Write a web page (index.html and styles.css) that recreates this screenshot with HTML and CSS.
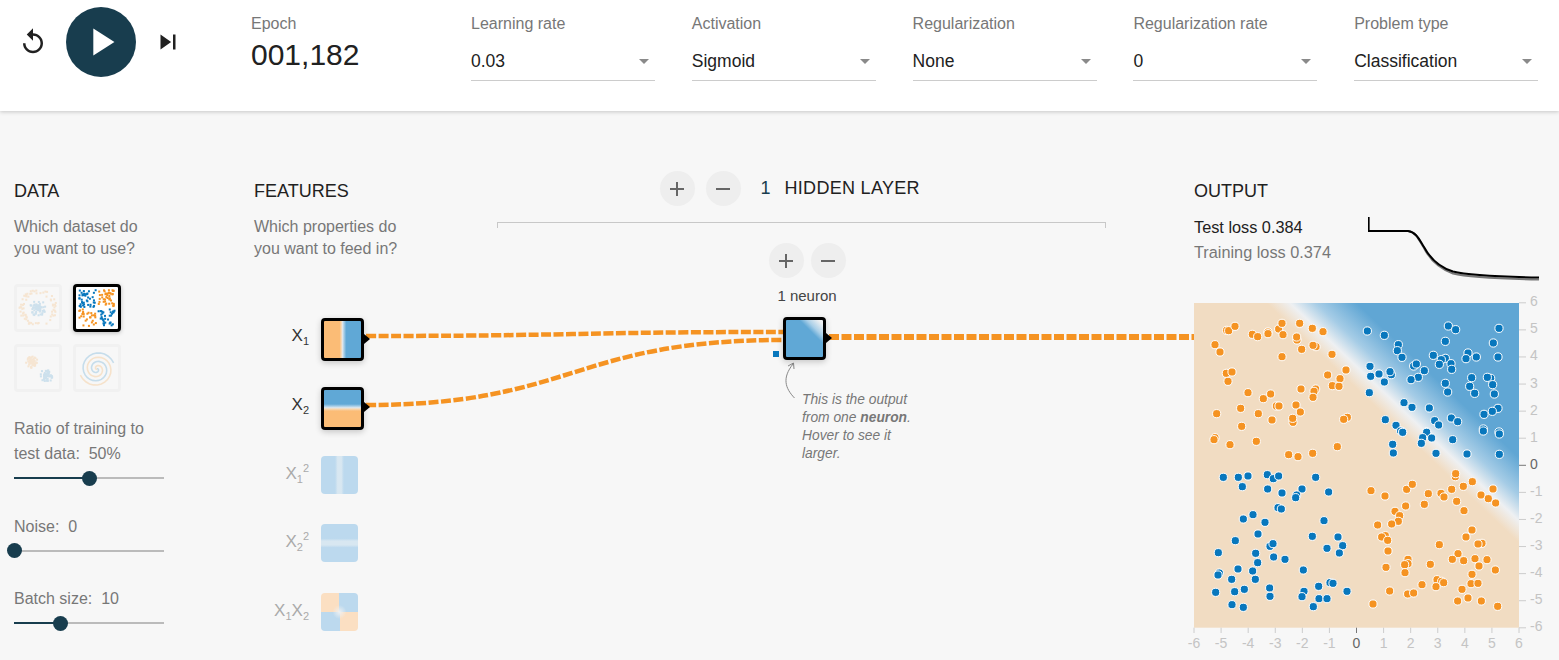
FILE: index.html
```html
<!DOCTYPE html>
<html lang="en">
<head>
  <meta charset="UTF-8">
  <title>Neural network playground</title>
  <link rel="stylesheet" href="styles.css">
</head>
<body>
  <header class="top-bar">
    <div class="player">
      <svg class="icon-btn" viewBox="0 0 24 24"><path d="M12 5V1L7 6l5 5V7c3.31 0 6 2.69 6 6s-2.69 6-6 6-6-2.69-6-6H4c0 4.42 3.58 8 8 8s8-3.58 8-8-3.58-8-8-8z"/></svg>
      <div class="play-btn">
        <svg viewBox="0 0 24 24"><path d="M8 5v14l11-7z"/></svg>
      </div>
      <svg class="icon-btn" viewBox="0 0 24 24"><path d="M6 18l8.5-6L6 6v12zM16 6v12h2V6h-2z"/></svg>
    </div>
    <div class="epoch">
      <div class="control-label">Epoch</div>
      <div class="epoch-value">001,182</div>
    </div>
    <div class="dropdowns">
      <div class="dropdown">
        <div class="control-label">Learning rate</div>
        <div class="dropdown-value">0.03</div>
      </div>
      <div class="dropdown">
        <div class="control-label">Activation</div>
        <div class="dropdown-value">Sigmoid</div>
      </div>
      <div class="dropdown">
        <div class="control-label">Regularization</div>
        <div class="dropdown-value">None</div>
      </div>
      <div class="dropdown">
        <div class="control-label">Regularization rate</div>
        <div class="dropdown-value">0</div>
      </div>
      <div class="dropdown">
        <div class="control-label">Problem type</div>
        <div class="dropdown-value">Classification</div>
      </div>
    </div>
  </header>

  <main class="main">
    <svg class="wires" viewBox="0 111 1559 549">
      <path class="wire" d="M366 336 C573 336 573 332 783 332"/>
      <path class="wire" d="M366 405 C573 405 573 340 783 340"/>
      <path class="wire wire-thick" d="M829 337 H1194"/>
      <path class="note-arrow" d="M794.5 398 C785 388 782 378 793 364"/>
      <path class="note-arrow" d="M788 366 L793.5 363 L794 369"/>
    </svg>

    <section class="col-data">
      <h4>DATA</h4>
      <p class="hint">Which dataset do<br>you want to use?</p>
      <div class="datasets">
        <svg class="dataset" id="ds-circle" viewBox="0 0 42 42"></svg>
        <svg class="dataset selected" id="ds-xor" viewBox="0 0 42 42"></svg>
        <svg class="dataset" id="ds-gauss" viewBox="0 0 42 42"></svg>
        <svg class="dataset" id="ds-spiral" viewBox="0 0 42 42"></svg>
      </div>
      <div class="slider-block">
        <div class="slider-label">Ratio of training to<br>test data:&nbsp; 50%</div>
        <div class="slider"><div class="slider-fill" style="width: 50%"></div><div class="slider-thumb" style="left: 50%"></div></div>
      </div>
      <div class="slider-block">
        <div class="slider-label">Noise:&nbsp; 0</div>
        <div class="slider"><div class="slider-fill" style="width: 0%"></div><div class="slider-thumb" style="left: 0%"></div></div>
      </div>
      <div class="slider-block">
        <div class="slider-label">Batch size:&nbsp; 10</div>
        <div class="slider"><div class="slider-fill" style="width: 30.7%"></div><div class="slider-thumb" style="left: 30.7%"></div></div>
      </div>
    </section>

    <section class="col-features">
      <h4>FEATURES</h4>
      <p class="hint">Which properties do<br>you want to feed in?</p>
      <div class="feature-list">
        <div class="feature">
          <div class="feature-name active">X<sub>1</sub></div>
          <div class="node heat-x1"></div>
        </div>
        <div class="feature">
          <div class="feature-name active">X<sub>2</sub></div>
          <div class="node heat-x2"></div>
        </div>
        <div class="feature">
          <div class="feature-name">X<sub>1</sub><sup>2</sup></div>
          <div class="node-off heat-x1sq"></div>
        </div>
        <div class="feature">
          <div class="feature-name">X<sub>2</sub><sup>2</sup></div>
          <div class="node-off heat-x2sq"></div>
        </div>
        <div class="feature">
          <div class="feature-name">X<sub>1</sub>X<sub>2</sub></div>
          <div class="node-off heat-x1x2"></div>
        </div>
      </div>
    </section>

    <section class="col-network">
      <div class="layers-head">
        <div class="round-btn">
          <svg viewBox="0 0 24 24"><path d="M19 13h-6v6h-2v-6H5v-2h6V5h2v6h6v2z"/></svg>
        </div>
        <div class="round-btn">
          <svg viewBox="0 0 24 24"><path d="M19 13H5v-2h14v2z"/></svg>
        </div>
        <span class="layers-count">1</span>
        <span class="layers-title">HIDDEN LAYER</span>
      </div>
      <div class="bracket"></div>
      <div class="layer">
        <div class="layer-btns">
          <div class="round-btn">
            <svg viewBox="0 0 24 24"><path d="M19 13h-6v6h-2v-6H5v-2h6V5h2v6h6v2z"/></svg>
          </div>
          <div class="round-btn">
            <svg viewBox="0 0 24 24"><path d="M19 13H5v-2h14v2z"/></svg>
          </div>
        </div>
        <div class="neuron-count">1 neuron</div>
        <div class="node neuron heat-neuron"><span class="bias"></span></div>
        <p class="note">This is the output<br>from one <b>neuron</b>.<br>Hover to see it<br>larger.</p>
      </div>
    </section>

    <section class="col-output">
      <h4>OUTPUT</h4>
      <div class="loss-row">
        <div class="losses">
          <div class="loss-test">Test loss 0.384</div>
          <div class="loss-train">Training loss 0.374</div>
        </div>
        <svg class="loss-chart" viewBox="1368 216 171 70">
          <path class="line-train" d="M1368.5 217 V231 H1408 C1416 232 1419 240 1424 248 C1430 260 1438 268 1453 273.5 C1465 276.5 1490 278.5 1539 279.5"/>
          <path class="line-test" d="M1368.5 217 V231 H1408 C1416 232 1419 239 1424 247 C1430 258 1438 267 1453 271.5 C1465 274.5 1490 276.5 1539 277.5"/>
        </svg>
      </div>
      <svg class="plot" id="plot" viewBox="1184 290 375 366">
        <defs>
          <linearGradient id="heat" gradientUnits="userSpaceOnUse" x1="1393.5" y1="422.6" x2="1436.2" y2="377.7">
            <stop offset="0" stop-color="#f1dcc2"/>
            <stop offset="0.26" stop-color="#eef0f2"/>
            <stop offset="0.55" stop-color="#a5cce6"/>
            <stop offset="1" stop-color="#60a6d4"/>
          </linearGradient>
        </defs>
        <rect x="1194" y="302" width="325" height="324.7" fill="url(#heat)"/>
      </svg>
    </section>
  </main>

  <script src="app.js"></script>
</body>
</html>
```

FILE: styles.css
```css
* {
  box-sizing: border-box;
}

body {
  margin: 0;
  height: 660px;
  overflow: hidden;
  background: #f7f7f7;
  font-family: "Liberation Sans", Arial, sans-serif;
  color: #777;
}

/* top bar */
.top-bar {
  display: flex;
  height: 111px;
  background: #fff;
  box-shadow: 0 1px 4px rgba(0, 0, 0, 0.2);
  position: relative;
  z-index: 2;
}

.player {
  display: flex;
  align-items: center;
  gap: 18px;
  height: 70px;
  margin: 7px 0 0 18px;
}

.icon-btn {
  width: 30px;
  height: 30px;
  fill: #212121;
}

.play-btn {
  width: 70px;
  height: 70px;
  margin-right: -1px;
  border-radius: 50%;
  background: #183d4e;
  display: flex;
  align-items: center;
  justify-content: center;
}

.play-btn svg {
  width: 46px;
  height: 46px;
  fill: #fff;
}

.control-label {
  font-size: 16px;
  line-height: 20px;
  color: #777;
}

.epoch {
  width: 220px;
  margin-left: 68px;
  padding-top: 14px;
}

.epoch-value {
  font-size: 30px;
  line-height: 36px;
  margin-top: 3px;
  color: #212121;
}

.dropdowns {
  display: flex;
  gap: 36.8px;
  padding-top: 14px;
}

.dropdown {
  width: 184px;
}

.dropdown-value {
  position: relative;
  font-size: 17.5px;
  line-height: 20px;
  height: 38px;
  margin-top: 9px;
  padding-top: 8px;
  color: #212121;
  border-bottom: 1px solid #ccc;
}

.dropdown-value::after {
  content: "";
  position: absolute;
  right: 6px;
  top: 16px;
  border-left: 5px solid transparent;
  border-right: 5px solid transparent;
  border-top: 5px solid #8a8a8a;
}

/* page columns */
.main {
  position: relative;
  display: flex;
  height: 549px;
}

.wires {
  position: absolute;
  left: 0;
  top: 0;
  width: 1559px;
  height: 549px;
  pointer-events: none;
}

.wire {
  fill: none;
  stroke: #f59322;
  stroke-width: 4.5;
  stroke-dasharray: 10 2.5;
}

.wire-thick {
  stroke-width: 6;
}

.note-arrow {
  fill: none;
  stroke: #888;
  stroke-width: 1;
}

section {
  padding-top: 68px;
}

h4 {
  margin: 0 0 13px;
  font-size: 18px;
  line-height: 24px;
  font-weight: normal;
  color: #212121;
}

.hint {
  margin: 0;
  font-size: 16px;
  line-height: 22px;
  color: #777;
}

.col-data {
  width: 254px;
  padding-left: 14px;
}

.datasets {
  display: grid;
  grid-template-columns: 48px 48px;
  gap: 12px 11px;
  margin-top: 24px;
}

.dataset {
  width: 48px;
  height: 48px;
  border: 3px solid #f1f1f1;
  border-radius: 4px;
  display: block;
}

.dataset.selected {
  border-color: #000;
  background: #fff;
  box-shadow: 0 1px 4px rgba(0, 0, 0, 0.25);
}

.slider-block {
  width: 150px;
  margin-top: 24px;
}

.slider-block + .slider-block {
  margin-top: 34.5px;
}

.slider-label {
  font-size: 16px;
  line-height: 25px;
  color: #777;
}

.slider {
  position: relative;
  height: 2px;
  margin-top: 11px;
  margin-bottom: 7px;
  background: #bbb;
}

.slider-fill {
  height: 2px;
  background: #183d4e;
}

.slider-thumb {
  position: absolute;
  top: -6.5px;
  width: 15px;
  height: 15px;
  margin-left: -7.5px;
  border-radius: 50%;
  background: #183d4e;
}

.col-features {
  width: 242px;
}

.feature-list {
  margin-top: 58px;
}

.feature {
  display: flex;
  align-items: flex-start;
  gap: 12px;
  height: 68.75px;
}

.feature-name {
  width: 55px;
  text-align: right;
  font-size: 17px;
  line-height: 35px;
  color: #aaa;
  white-space: nowrap;
}

.feature-name.active {
  color: #333;
}

.feature-name sub,
.feature-name sup {
  font-size: 11px;
  line-height: 0;
}

.node {
  position: relative;
  width: 43px;
  height: 43px;
  border: 3px solid #000;
  border-radius: 4px;
  box-shadow: 0 2px 6px rgba(0, 0, 0, 0.2);
}

.node::after {
  content: "";
  position: absolute;
  right: -9px;
  top: 12.5px;
  border-top: 5px solid transparent;
  border-bottom: 5px solid transparent;
  border-left: 6px solid #000;
}

.node-off {
  width: 37px;
  height: 38px;
  border-radius: 4px;
}

.heat-x1 {
  background: linear-gradient(90deg, #fbbc76 0 42%, #f5d9b8 47%, #dfe6ec 50%, #a9cfe8 54%, #60a8d6 60%);
}

.heat-x2 {
  background: linear-gradient(180deg, #60a8d6 0 38%, #a9cfe8 44%, #dfe6ec 48%, #f5d9b8 51%, #fbbc76 57%);
}

.heat-neuron {
  background: linear-gradient(45deg, #60a8d6 0 68%, #a9cfe8 78%, #eef0f2 94%);
}

.heat-x1sq {
  background: linear-gradient(90deg, #bcd9ee 0 38%, #d8e7f1 45% 55%, #bcd9ee 62%);
}

.heat-x2sq {
  background: linear-gradient(180deg, #bcd9ee 0 38%, #d8e7f1 45% 55%, #bcd9ee 62%);
}

.heat-x1x2 {
  background:
    radial-gradient(circle, #eef0f1 0, rgba(238, 240, 241, 0) 7px),
    conic-gradient(#bcd9ee 0 90deg, #fbdfc2 90deg 180deg, #bcd9ee 180deg 270deg, #fbdfc2 270deg);
}

/* network column */
.col-network {
  width: 698px;
  padding-top: 60px;
}

.layers-head {
  display: flex;
  align-items: center;
  height: 35px;
  padding-left: 163.5px;
  gap: 11px;
}

.round-btn {
  width: 35px;
  height: 35px;
  border-radius: 50%;
  background: #eee;
  display: flex;
  align-items: center;
  justify-content: center;
}

.round-btn svg {
  width: 24px;
  height: 24px;
  fill: #666;
}

.layers-count {
  margin-left: 9px;
  font-size: 18px;
  color: #183d4e;
}

.layers-title {
  margin-left: 3px;
  font-size: 18px;
  letter-spacing: 0.3px;
  color: #212121;
}

.bracket {
  width: 609px;
  height: 6px;
  margin: 16px 0 0 1px;
  border: 1px solid #c8c8c8;
  border-bottom: none;
}

.layer {
  width: 90px;
  margin: 15px 0 0 266px;
}

.layer-btns {
  display: flex;
  justify-content: center;
  gap: 7px;
}

.neuron-count {
  margin-top: 9px;
  font-size: 15px;
  line-height: 18px;
  text-align: center;
  color: #444;
}

.neuron {
  margin: 12px 0 0 21px;
}

.bias {
  position: absolute;
  left: -13px;
  top: 31px;
  width: 6px;
  height: 6px;
  background: #0877bd;
}

.note {
  width: 130px;
  margin: 31px 0 0 40px;
  font-size: 13.8px;
  line-height: 18px;
  font-style: italic;
  color: #777;
}

/* output column */
.col-output {
  width: 365px;
}

.loss-row {
  display: flex;
  justify-content: space-between;
  height: 75px;
  padding-right: 20px;
}

.losses {
  margin-top: -1px;
  font-size: 16.3px;
  line-height: 24.5px;
}

.loss-test {
  color: #212121;
}

.loss-train {
  color: #777;
}

.loss-chart {
  width: 171px;
  height: 70px;
  flex: none;
}

.line-test,
.line-train {
  fill: none;
  stroke-width: 2;
}

.line-test {
  stroke: #000;
}

.line-train {
  stroke: #777;
}

.plot {
  display: block;
  width: 375px;
  height: 366px;
  margin-left: -10px;
}

.dot {
  stroke: #fff;
  stroke-width: 1;
}

.dot-orange {
  fill: #f59322;
}

.dot-blue {
  fill: #0877bd;
}

.tick {
  stroke: #ccc;
}

.tick-zero {
  stroke: #777;
}

.tick-text {
  font-size: 14px;
  fill: #c4c4c4;
}

.tick-text-zero {
  fill: #666;
}

.spiral {
  fill: none;
  stroke-width: 1.6;
}
```

FILE: app.js
```js
const SVG_NS = 'http://www.w3.org/2000/svg';
const ORANGE = '#f59322';
const BLUE = '#0877bd';

function el(parent, name, attrs, text) {
  const node = document.createElementNS(SVG_NS, name);
  for (const key in attrs) node.setAttribute(key, attrs[key]);
  if (text !== undefined) node.textContent = text;
  parent.appendChild(node);
  return node;
}

// seeded generator, the thumbnails should look the same every load
let seed = 1234;
function rnd() {
  seed = (seed + 0x6D2B79F5) | 0;
  let t = Math.imul(seed ^ (seed >>> 15), 1 | seed);
  t = (t + Math.imul(t ^ (t >>> 7), 61 | t)) ^ t;
  return ((t ^ (t >>> 14)) >>> 0) / 4294967296;
}

// ---- dataset thumbnails ----
function square(svg, x, y, color, group) {
  el(group || svg, 'rect', { x: x - 1, y: y - 1, width: 2, height: 2, fill: color });
}

function drawCircle() {
  const svg = document.getElementById('ds-circle');
  const g = el(svg, 'g', { opacity: 0.17 });
  for (let i = 0; i < 70; i++) {
    const a = rnd() * Math.PI * 2;
    const r = 14 + rnd() * 4.5;
    square(svg, 21 + r * Math.cos(a), 21 + r * Math.sin(a), ORANGE, g);
    const r2 = rnd() * 8;
    const a2 = rnd() * Math.PI * 2;
    square(svg, 21 + r2 * Math.cos(a2), 21 + r2 * Math.sin(a2), BLUE, g);
  }
}

function drawXor() {
  const svg = document.getElementById('ds-xor');
  for (let i = 0; i < 170; i++) {
    const x = 3 + rnd() * 36;
    const y = 3 + rnd() * 36;
    if (Math.abs(x - 21) < 1 || Math.abs(y - 21) < 1) continue;
    square(svg, x, y, (x - 21) * (y - 21) > 0 ? BLUE : ORANGE);
  }
}

function drawGauss() {
  const svg = document.getElementById('ds-gauss');
  const g = el(svg, 'g', { opacity: 0.17 });
  for (let i = 0; i < 60; i++) {
    const a = rnd() * Math.PI * 2;
    const r = rnd() * 6;
    square(svg, 15 + r * Math.cos(a), 15 + r * Math.sin(a), ORANGE, g);
    const a2 = rnd() * Math.PI * 2;
    const r2 = rnd() * 6.5;
    square(svg, 29 + r2 * Math.cos(a2), 29 + r2 * Math.sin(a2), BLUE, g);
  }
}

function drawSpiral() {
  const svg = document.getElementById('ds-spiral');
  const g = el(svg, 'g', { opacity: 0.2 });
  [[BLUE, Math.PI * 1.05], [ORANGE, Math.PI * 0.05]].forEach(([color, delta]) => {
    const pts = [];
    for (let t = 0; t < 13.2; t += 0.25) {
      const r = t * 1.36;
      pts.push((21 + r * Math.cos(t + delta + 2.2)).toFixed(1) + ',' + (22 + r * Math.sin(t + delta + 2.2)).toFixed(1));
    }
    el(g, 'polyline', { points: pts.join(' '), class: 'spiral', stroke: color });
  });
}

// ---- plot ----
// top part was read at y offset 200, bottom part at y offset 430, both at 3x
const ORANGE_TOP = [[140,388],[146,389],[165,376],[217,400],[233,407],[264,393],[264,398],[296,384],[306,367],[309,401],[359,367],[397,382],[429,392],[351,417],[350,408],[365,445],[408,437],[399,433],[105,431],[120,453],[306,467],[456,460],[139,517],[156,513],[144,541],[443,522],[498,507],[480,533],[457,554],[477,556],[407,564],[363,564],[402,571],[399,589],[204,575],[250,593],[272,579],[289,615],[297,615],[348,612],[361,633],[110,638],[182,622],[235,638],[276,657],[339,664],[338,652],[502,649],[491,655],[185,676]];
const BLUE_TOP = [[562,390],[613,403],[655,431],[652,449],[666,469],[805,375],[827,386],[796,421],[957,382],[940,426],[954,468],[760,463],[796,472],[784,476],[778,490],[813,488],[815,505],[864,456],[858,473],[889,468],[570,496],[701,495],[709,489],[733,509],[715,529],[693,536],[572,526],[597,519],[634,521],[630,512],[613,543],[568,575],[796,547],[803,573],[875,530],[869,556],[884,577],[932,532],[922,529],[938,551],[943,579],[672,605],[696,619],[748,621],[954,622],[937,631],[912,640],[814,651],[833,662],[764,659],[776,672],[616,656],[648,673],[662,690],[668,693],[740,693],[910,684],[957,693]];
const ORANGE_BOTTOM = [[105,20],[102,26],[150,41],[229,31],[472,47],[326,71],[354,77],[398,67],[573,179],[615,195],[680,175],[697,160],[745,188],[733,220],[677,225],[645,241],[659,254],[655,271],[635,279],[593,282],[783,187],[792,198],[815,175],[826,137],[827,128],[850,166],[877,152],[939,174],[903,192],[925,203],[947,216],[830,211],[852,239],[876,297],[858,318],[906,337],[894,339],[778,341],[834,368],[817,385],[851,389],[885,383],[921,386],[897,405],[946,417],[876,430],[873,458],[894,457],[846,475],[864,501],[833,510],[904,510],[953,526],[616,314],[605,318],[623,328],[624,360],[684,385],[684,398],[674,401],[618,409],[751,400],[675,425],[771,446],[785,451],[791,455],[768,467],[726,461],[629,480],[683,489],[701,486],[579,519]];
const BLUE_BOTTOM = [[668,4],[740,4],[728,20],[755,21],[638,40],[724,37],[818,26],[910,0],[958,9],[640,66],[768,67],[861,69],[958,70],[130,139],[175,139],[204,135],[262,131],[280,143],[296,135],[407,139],[187,167],[263,174],[306,186],[366,174],[350,192],[347,200],[446,183],[294,230],[304,234],[219,251],[190,264],[255,274],[432,269],[234,309],[166,329],[397,316],[474,318],[488,344],[270,346],[279,338],[441,352],[478,366],[115,365],[227,367],[281,378],[315,385],[233,395],[174,414],[218,420],[370,417],[118,426],[114,432],[155,445],[226,445],[450,455],[459,457],[269,471],[416,466],[164,482],[193,475],[107,484],[372,481],[501,481],[366,497],[270,496],[417,503],[441,503],[156,521],[190,529],[400,527]];

function drawDots(svg, points, offsetY, cls) {
  points.forEach(([x, y]) => {
    el(svg, 'circle', { cx: 1180 + x / 3, cy: offsetY + y / 3, r: 4.1, class: 'dot ' + cls });
  });
}

function drawAxes(svg) {
  const step = 325 / 12;
  for (let v = -6; v <= 6; v++) {
    const zero = v === 0;
    const tick = zero ? 'tick tick-zero' : 'tick';
    const label = zero ? 'tick-text tick-text-zero' : 'tick-text';
    const y = 464.3 - v * step;
    const x = 1356.5 + v * step;
    el(svg, 'line', { x1: 1519, x2: 1526, y1: y, y2: y, class: tick });
    el(svg, 'text', { x: 1530, y: y + 3.5, class: label }, v);
    el(svg, 'line', { x1: x, x2: x, y1: 626.7, y2: 632, class: tick });
    el(svg, 'text', { x: x, y: 647, 'text-anchor': 'middle', class: label }, v);
  }
}

drawCircle();
drawXor();
drawGauss();
drawSpiral();

const plot = document.getElementById('plot');
drawDots(plot, ORANGE_TOP, 200, 'dot-orange');
drawDots(plot, BLUE_TOP, 200, 'dot-blue');
drawDots(plot, ORANGE_BOTTOM, 430, 'dot-orange');
drawDots(plot, BLUE_BOTTOM, 430, 'dot-blue');
drawAxes(plot);
```
